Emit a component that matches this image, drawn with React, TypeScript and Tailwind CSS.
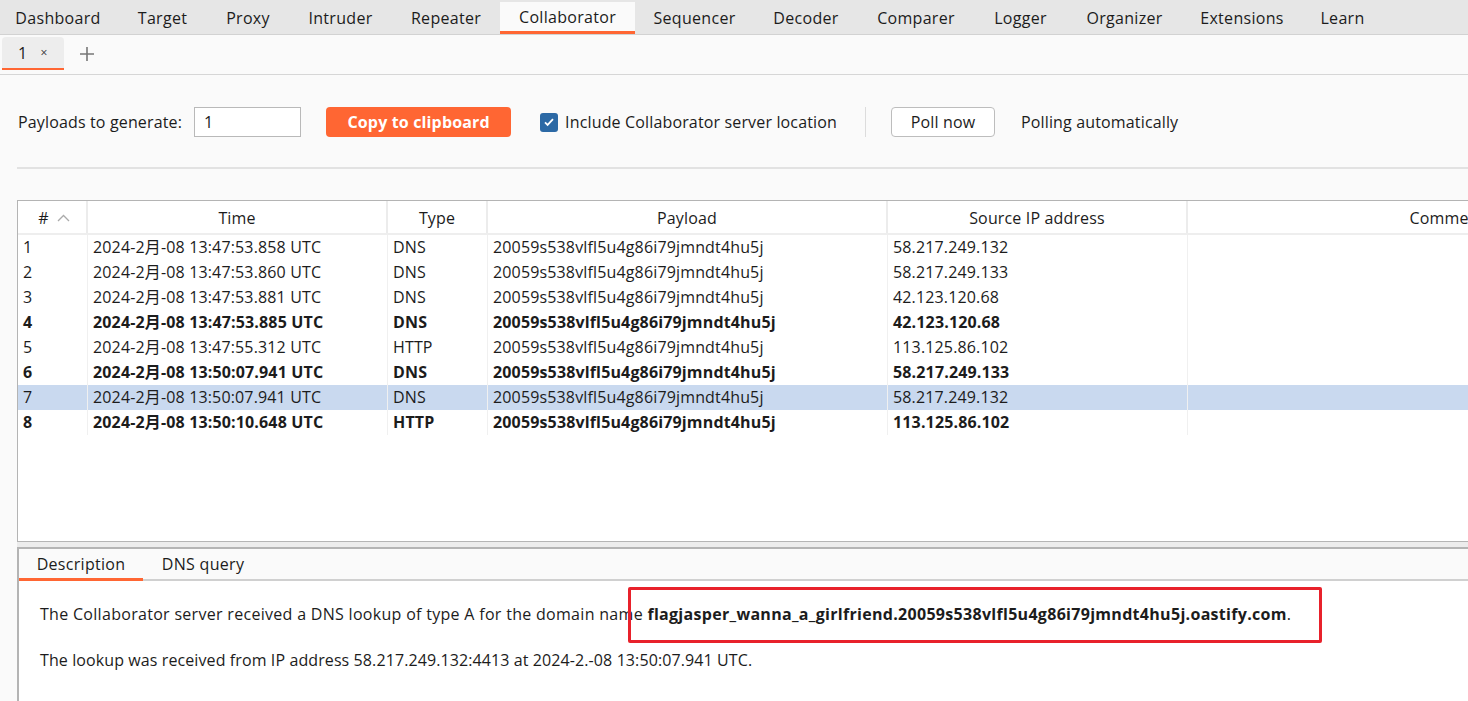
import React from "react";

const topTabs = [
  { name: "Dashboard", w: "w-[120px]" },
  { name: "Target", w: "w-[89px]" },
  { name: "Proxy", w: "w-[82px]" },
  { name: "Intruder", w: "w-[103px]" },
  { name: "Repeater", w: "w-[108px]" },
  { name: "Collaborator", w: "w-[135px]", active: true },
  { name: "Sequencer", w: "w-[119px]" },
  { name: "Decoder", w: "w-[104px]" },
  { name: "Comparer", w: "w-[116px]" },
  { name: "Logger", w: "w-[93px]" },
  { name: "Organizer", w: "w-[115px]" },
  { name: "Extensions", w: "w-[120px]" },
  { name: "Learn", w: "w-[81px]" },
];

const payload = "20059s538vlfl5u4g86i79jmndt4hu5j";

const rows = [
  { n: 1, time: "2024-2月-08 13:47:53.858 UTC", type: "DNS", ip: "58.217.249.132" },
  { n: 2, time: "2024-2月-08 13:47:53.860 UTC", type: "DNS", ip: "58.217.249.133" },
  { n: 3, time: "2024-2月-08 13:47:53.881 UTC", type: "DNS", ip: "42.123.120.68" },
  { n: 4, time: "2024-2月-08 13:47:53.885 UTC", type: "DNS", ip: "42.123.120.68", bold: true },
  { n: 5, time: "2024-2月-08 13:47:55.312 UTC", type: "HTTP", ip: "113.125.86.102" },
  { n: 6, time: "2024-2月-08 13:50:07.941 UTC", type: "DNS", ip: "58.217.249.133", bold: true },
  { n: 7, time: "2024-2月-08 13:50:07.941 UTC", type: "DNS", ip: "58.217.249.132", selected: true },
  { n: 8, time: "2024-2月-08 13:50:10.648 UTC", type: "HTTP", ip: "113.125.86.102", bold: true },
];

const cols = "grid grid-cols-[70px_300px_100px_400px_300px_520px]";

export default function App() {
  return (
    <div className="w-[1468px] h-[701px] overflow-hidden bg-[#fafafa] text-[16px] tracking-[0.3px] text-[#1c1c1c] font-['Open_Sans','Noto_Sans_CJK_SC',sans-serif] flex flex-col">
      {/* main tool tabs */}
      <div className="h-[35px] shrink-0 flex bg-[#e6e6e6] border-b border-[#d2d2d2] ml-[-2px] pt-[2px]">
        {topTabs.map((t) => (
          <div
            key={t.name}
            className={
              t.w +
              " h-full flex items-center justify-center " +
              (t.active ? "bg-[#fafafa] border-b-[3px] border-[#ff6633] pt-[1px]" : "")
            }
          >
            {t.name}
          </div>
        ))}
      </div>

      {/* sub tabs */}
      <div className="h-[40px] shrink-0 flex items-end border-b border-[#d6d6d6] px-[2px]">
        <div className="w-[62px] h-[33px] mb-[4px] bg-[#ededed] rounded-t-[4px] border-b-[2px] border-[#ff6633] flex items-center gap-[13px] pl-[16px]">
          <span>1</span>
          <span className="text-[12px] text-[#333]">×</span>
        </div>
        <div className="w-[24px] h-[33px] mb-[4px] ml-[11px] flex items-center justify-center">
          <svg width="16" height="16" viewBox="0 0 16 16">
            <path d="M8 1v14M1 8h14" stroke="#777" strokeWidth="1.6" />
          </svg>
        </div>
      </div>

      {/* controls */}
      <div className="h-[92px] shrink-0 flex items-center pl-[18px] pt-[2px] tracking-[0.15px]">
        <span>Payloads to generate:</span>
        <div className="ml-[12px] w-[107px] h-[30px] bg-white border border-[#b9b9b9] flex items-center pl-[9px]">
          1
        </div>
        <button className="ml-[25px] w-[185px] h-[30px] bg-[#ff6633] rounded-[4px] text-white font-bold">
          Copy to clipboard
        </button>
        <div className="ml-[29px] w-[18px] h-[19px] bg-[#2c69a5] rounded-[3px] flex items-center justify-center">
          <svg width="12" height="12" viewBox="0 0 12 12">
            <path d="M2 6.3l2.6 2.6L10 3.2" stroke="white" strokeWidth="1.8" fill="none" />
          </svg>
        </div>
        <span className="ml-[7px]">Include Collaborator server location</span>
        <div className="ml-[28px] w-px h-[30px] bg-[#dcdcdc]" />
        <button className="ml-[25px] w-[104px] h-[30px] bg-white border border-[#bdbdbd] rounded-[4px]">
          Poll now
        </button>
        <span className="ml-[26px]">Polling automatically</span>
      </div>

      <div className="ml-[17px] h-[2px] shrink-0 bg-[#e2e2e2]" />
      <div className="h-[31px] shrink-0" />

      {/* interactions table */}
      <div className="ml-[17px] h-[342px] shrink-0 bg-white border-t border-l border-b border-[#b4b4b4] overflow-hidden tracking-[0.15px]">
        <div className={cols + " h-[34px] border-b-2 border-[#eeeeee]"}>
          <div className="flex items-center justify-center gap-[8px] pl-[4px] pt-[2px] border-r-2 border-[#ececec]">
            <span>#</span>
            <svg width="13" height="8" viewBox="0 0 13 8">
              <path d="M1 7l5.5-5.5L12 7" stroke="#aaa" strokeWidth="1.3" fill="none" />
            </svg>
          </div>
          {["Time", "Type", "Payload", "Source IP address", "Comment"].map((h) => (
            <div key={h} className="flex items-center justify-center pt-[2px] border-r-2 border-[#ececec] whitespace-nowrap">
              {h}
            </div>
          ))}
        </div>
        {rows.map((r) => (
          <div
            key={r.n}
            className={
              cols +
              " h-[25px] leading-[25px] " +
              (r.bold ? "font-bold " : "") +
              (r.selected ? "bg-[#c9d9ef]" : "")
            }
          >
            <div className="pl-[5px] border-r border-[#f0f0f0]">{r.n}</div>
            <div className="pl-[5px] border-r border-[#f0f0f0] whitespace-nowrap">{r.time}</div>
            <div className="pl-[5px] border-r border-[#f0f0f0]">{r.type}</div>
            <div className="pl-[5px] border-r border-[#f0f0f0]">{payload}</div>
            <div className="pl-[5px] border-r border-[#f0f0f0]">{r.ip}</div>
            <div />
          </div>
        ))}
      </div>

      <div className="h-[5px] shrink-0 bg-[#ececec] ml-[17px]" />

      {/* details panel */}
      <div className="relative ml-[17px] flex-1 bg-white border-t-2 border-l-2 border-[#b4b4b4] flex flex-col">
        <div className="h-[32px] shrink-0 flex bg-[#fafafa] border-b-2 border-[#d0d0d0]">
          <div className="w-[124px] flex items-center justify-center border-b-[3px] border-[#ff6633] mb-[-2px]">
            Description
          </div>
          <div className="w-[120px] flex items-center justify-center">DNS query</div>
        </div>
        <div className="pl-[21px] pt-[21px] leading-[24px]">
          <p>
            The Collaborator server received a DNS lookup of type A for the domain name{" "}
            <span className="font-bold">
              flagjasper_wanna_a_girlfriend.20059s538vlfl5u4g86i79jmndt4hu5j.oastify.com
            </span>
            .
          </p>
          <p className="mt-[22px] tracking-[0.1px]">
            The lookup was received from IP address 58.217.249.132:4413 at 2024-2.-08 13:50:07.941 UTC.
          </p>
        </div>
        <div className="absolute left-[609px] top-[38px] w-[694px] h-[56px] border-[3px] border-[#e8212b] rounded-[2px]" />
      </div>
    </div>
  );
}
